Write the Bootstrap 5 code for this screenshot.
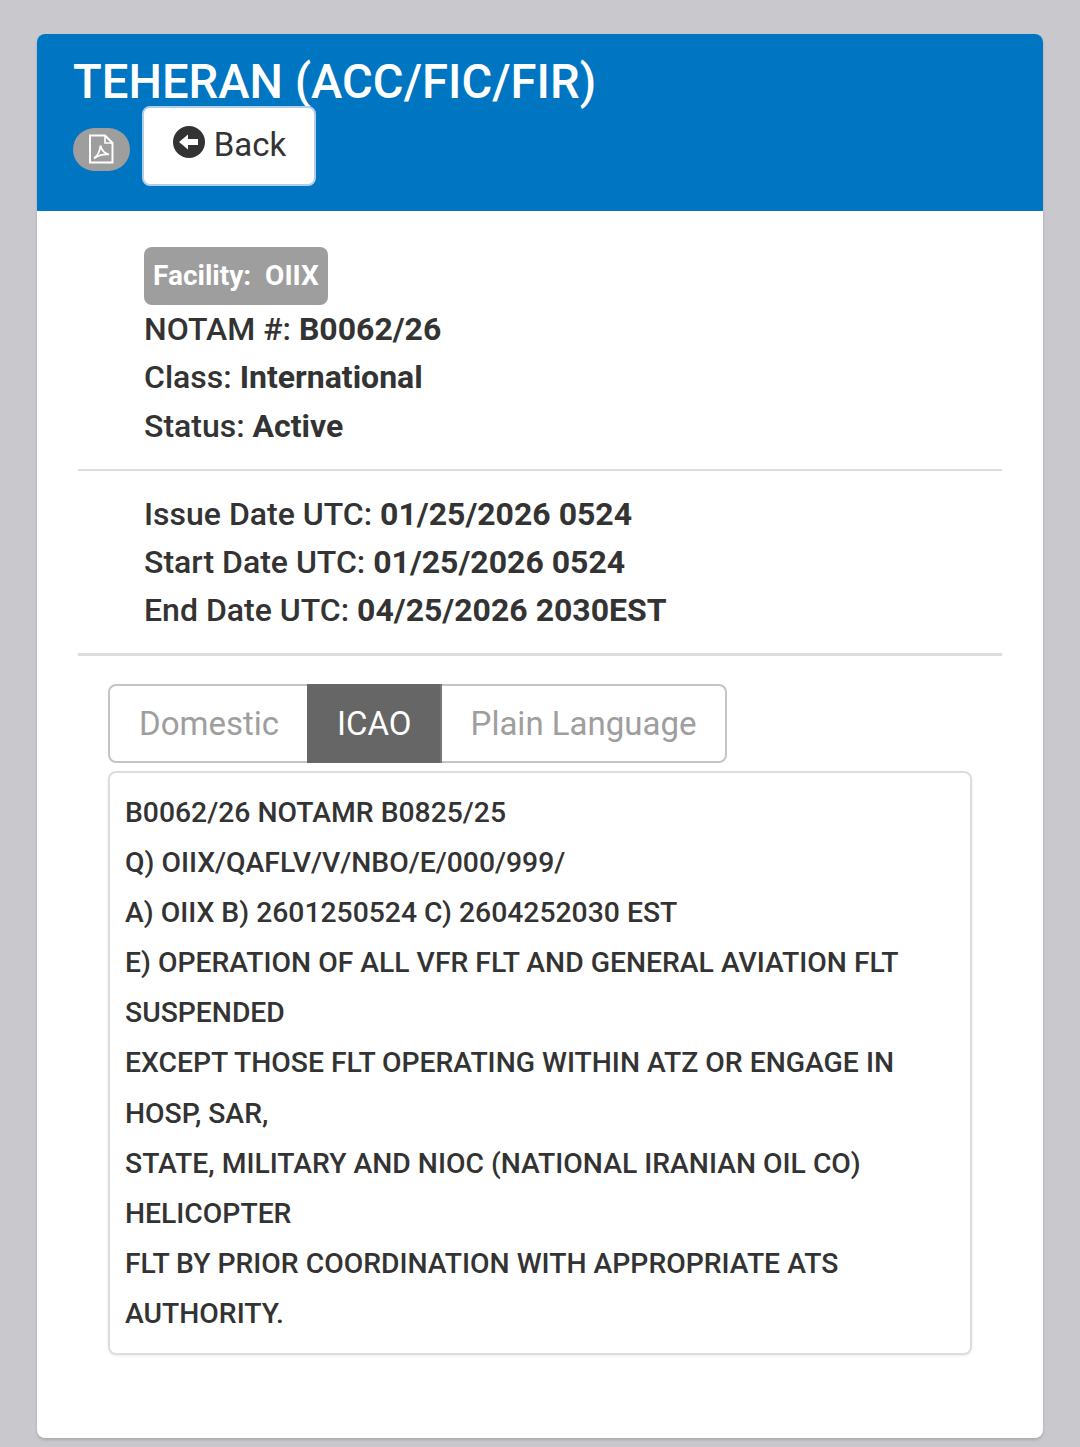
<!DOCTYPE html>
<html lang="en">
<head>
    <meta charset="UTF-8">
    <meta name="viewport" content="width=device-width, initial-scale=1.0">
    <title>NOTAM</title>
    <link href="https://cdn.jsdelivr.net/npm/bootstrap@5.3.3/dist/css/bootstrap.min.css" rel="stylesheet">
    <style>
        html, body { height: 1447px; overflow: hidden; }
        body {
            background: #c9c8cd;
            font-family: Roboto, "Liberation Sans", sans-serif;
            color: #333;
            padding: 34px 37px 9px;
        }
        .notam-card {
            height: 1404px;
            border: 0;
            border-radius: 8px;
            box-shadow: 0 2px 3px rgba(0,0,0,.15);
            overflow: hidden;
        }
        .notam-head {
            background: #0075c2;
            height: 177px;
            padding: 21px 36px 0;
            color: #fff;
        }
        .notam-title {
            font-size: 47.2px;
            line-height: 55px;
            font-weight: 500;
            margin: 0;
        }
        .pdf-pill {
            width: 57px;
            height: 43px;
            margin-top: 18px;
            border-radius: 22px;
            background: #9e9e9e;
        }
        .pdf-pill svg { margin: -2px 0 0 -1px; }
        .back-btn {
            width: 174px;
            height: 80px;
            margin-top: -4px;
            margin-left: 12px;
            background: #fff;
            border: 2px solid #b3cfe6;
            border-radius: 8px;
            font-size: 33px;
            color: #333;
            padding: 0 0 2px;
            gap: 9px;
        }
        .back-btn:hover { background: #fff; color: #333; border-color: #b3cfe6; }
        .back-btn svg { margin: -7px 0 0 1px; }
        .info-block { padding-left: 107px; font-size: 32px; line-height: 48px; font-weight: 500; }
        .info-first { padding-top: 36px; padding-bottom: 20px; }
        .info-second { padding-top: 19px; padding-bottom: 19px; }
        .status-row { padding-top: 1px; margin-bottom: -1px; }
        .fac-tag {
            display: inline-block;
            background: #9e9e9e;
            color: #fff;
            font-size: 28px;
            font-weight: 700;
            line-height: 58px;
            height: 58px;
            padding: 0 9px;
            border-radius: 8px;
            white-space: pre;
            vertical-align: top;
        }
        .notam-card > hr.rule-line { margin: 0 41px; border: 0; border-top: 2px solid #ddd; opacity: 1; }
        .notam-card > hr.rule-thick { border-top-width: 3px; }
        .tab-wrap { padding: 28px 0 0 71px; }
        .tab-row {
            display: inline-flex;
            height: 79px;
            border: 2px solid #c4c4c4;
            border-radius: 8px;
            font-size: 33px;
            color: #9e9e9e;
        }
        .tab-item { display: flex; align-items: center; padding: 0 29px; }
        .tab-item:first-child { padding-right: 28px; }
        .tab-on { background: #666; color: #fff; margin: -2px 0; padding: 0 28px 0 30px; border-right: 2px solid #777; }
        .msg-box {
            width: 864px;
            margin-top: 8px;
            height: 584px;
            padding: 15px;
            border: 2px solid #ddd;
            border-radius: 8px;
            box-shadow: 0 1px 3px rgba(0,0,0,.08);
            font-size: 28.3px;
            line-height: 50.1px;
            font-weight: 500;
        }
    </style>
</head>
<body>

    <div class="card notam-card">
        <div class="notam-head">
            <h1 class="notam-title">TEHERAN (ACC/FIC/FIR)</h1>
            <div class="d-flex align-items-start">
                <div class="pdf-pill d-flex align-items-center justify-content-center">
                    <svg width="26" height="30" viewBox="0 0 26 30" fill="none" stroke="#fff" stroke-width="2">
                        <path d="M2 1.5H17L24.5 9V28.5H2Z"/>
                        <path d="M17 1.5V9H24.5" stroke-width="1.6"/>
                        <path d="M6 24.5C9 22 12 17 12.5 11.5C13.5 16 17 19.5 21 20.5C16 20 10 21.5 6 24.5Z" stroke-width="1.7"/>
                    </svg>
                </div>
                <button class="btn back-btn d-flex align-items-center justify-content-center">
                    <svg width="32" height="32" viewBox="0 0 32 32">
                        <circle cx="16" cy="16" r="16" fill="#333"/>
                        <path d="M6 16L15 8.5V13H25V19H15V23.5Z" fill="#fff"/>
                    </svg>
                    <span>Back</span>
                </button>
            </div>
        </div>

        <div class="info-block info-first">
            <div class="fac-tag">Facility:  OIIX</div>
            <div>NOTAM #: <strong>B0062/26</strong></div>
            <div>Class: <strong>International</strong></div>
            <div class="status-row">Status: <strong>Active</strong></div>
        </div>
        <hr class="rule-line">
        <div class="info-block info-second">
            <div>Issue Date UTC: <strong>01/25/2026 0524</strong></div>
            <div>Start Date UTC: <strong>01/25/2026 0524</strong></div>
            <div>End Date UTC: <strong>04/25/2026 2030EST</strong></div>
        </div>
        <hr class="rule-line rule-thick">

        <div class="tab-wrap">
            <div class="tab-row">
                <div class="tab-item">Domestic</div>
                <div class="tab-item tab-on">ICAO</div>
                <div class="tab-item">Plain Language</div>
            </div>
            <div class="msg-box">
                B0062/26 NOTAMR B0825/25<br>
                Q) OIIX/QAFLV/V/NBO/E/000/999/<br>
                A) OIIX B) 2601250524 C) 2604252030 EST<br>
                E) OPERATION OF ALL VFR FLT AND GENERAL AVIATION FLT SUSPENDED<br>
                EXCEPT THOSE FLT OPERATING WITHIN ATZ OR ENGAGE IN HOSP, SAR,<br>
                STATE, MILITARY AND NIOC (NATIONAL IRANIAN OIL CO) HELICOPTER<br>
                FLT BY PRIOR COORDINATION WITH APPROPRIATE ATS AUTHORITY.
            </div>
        </div>
    </div>

    <script src="https://cdn.jsdelivr.net/npm/bootstrap@5.3.3/dist/js/bootstrap.bundle.min.js"></script>
</body>
</html>
